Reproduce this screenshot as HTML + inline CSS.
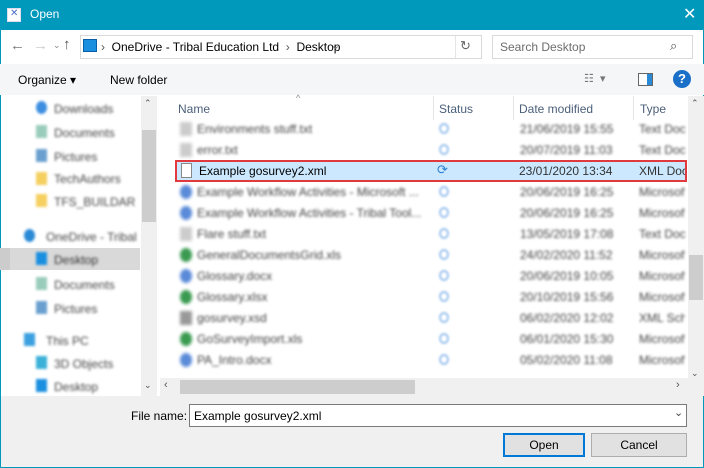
<!DOCTYPE html><html><head><style>
*{margin:0;padding:0;box-sizing:border-box}
body{width:704px;height:468px;overflow:hidden;font-family:"Liberation Sans",sans-serif;font-size:12px;color:#000;background:#fff;position:relative}
.a{position:absolute}
.bl{filter:blur(1.4px);color:#444;white-space:nowrap}
.row{position:absolute;left:175px;width:511px;height:21px}
.row span{position:absolute;top:4px}
.row span.t{width:46px;overflow:hidden}
.ic{position:absolute;left:5px;top:4px;width:12px;height:14px;filter:blur(1.5px)}
.st{position:absolute;left:264px;top:5px;width:10px;height:11px;border-radius:50%;border:2px solid #9cc3ee;filter:blur(1px)}
.nv{position:absolute;left:34px;filter:blur(1.4px);color:#444;white-space:nowrap}
.ni{position:absolute;left:36px;width:11px;height:13px;filter:blur(1.4px)}
</style></head><body>
<div class="a" style="left:0;top:0;width:704px;height:30px;background:#0099bc"></div>
<div class="a" style="left:7px;top:8px;width:14px;height:14px;background:#fff;border:1px solid #dde"></div>
<div class="a" style="left:10px;top:8px;color:#4a6fc8;font-size:10px">✕</div>
<div class="a" style="left:30px;top:7px;color:#fff;font-size:12px">Open</div>
<div class="a" style="left:683px;top:4px;color:#fff;font-size:16px">✕</div>
<div class="a" style="left:0;top:30px;width:1px;height:438px;background:#0099bc"></div>
<div class="a" style="left:703px;top:30px;width:1px;height:438px;background:#0099bc"></div>
<div class="a" style="left:0;top:467px;width:704px;height:1px;background:#0099bc"></div>
<div class="a" style="left:10px;top:37px;color:#777;font-size:15px">←</div>
<div class="a" style="left:33px;top:37px;color:#ccc;font-size:15px">→</div>
<div class="a" style="left:53px;top:40px;color:#888;font-size:9px">⌄</div>
<div class="a" style="left:63px;top:36px;color:#555;font-size:15px">↑</div>
<div class="a" style="left:80px;top:35px;width:402px;height:24px;border:1px solid #d9d9d9"></div>
<div class="a" style="left:83px;top:39px;width:14px;height:13px;background:#1a8fe0;border:1px solid #0a5ea8"></div>
<div class="a" style="left:101px;top:40px;color:#555">›&nbsp; <span style="color:#000">OneDrive - Tribal Education Ltd</span> &nbsp;›&nbsp; <span style="color:#000">Desktop</span></div>
<div class="a" style="left:331px;top:39px;color:#666;font-size:11px">⌄</div>
<div class="a" style="left:460px;top:38px;color:#666;font-size:13px">↻</div>
<div class="a" style="left:455px;top:36px;width:1px;height:22px;background:#e5e5e5"></div>
<div class="a" style="left:492px;top:35px;width:201px;height:24px;border:1px solid #d9d9d9"></div>
<div class="a" style="left:500px;top:40px;color:#6d6d6d">Search Desktop</div>
<div class="a" style="left:670px;top:38px;color:#555;font-size:13px">⌕</div>
<div class="a" style="left:0;top:64px;width:704px;height:31px;background:#f5f6f7"></div>
<div class="a" style="left:18px;top:73px">Organize ▾</div>
<div class="a" style="left:110px;top:73px">New folder</div>
<div class="a" style="left:584px;top:72px;color:#777;font-size:11px">☷ &nbsp;▾</div>
<div class="a" style="left:638px;top:73px;width:15px;height:13px;border:1px solid #666;background:linear-gradient(90deg,#fff 60%,#2a8ad6 60%)"></div>
<div class="a" style="left:673px;top:70px;width:18px;height:18px;border-radius:50%;background:#1a6fc8;color:#fff;font-weight:bold;text-align:center;line-height:18px;font-size:13px">?</div>
<div class="a" style="left:10px;top:248px;width:130px;height:22px;background:#d9d9d9"></div>
<div class="a" style="left:0;top:248px;width:10px;height:22px;background:#ccc"></div>
<div class="ni" style="top:101px;background:#3b8ee0;border-radius:50%"></div><div class="nv" style="left:54px;top:102px">Downloads</div>
<div class="ni" style="top:125px;background:#9cb"></div><div class="nv" style="left:54px;top:126px">Documents</div>
<div class="ni" style="top:149px;background:#6aa0d0"></div><div class="nv" style="left:54px;top:150px">Pictures</div>
<div class="ni" style="top:172px;background:#f5d060"></div><div class="nv" style="left:54px;top:172px">TechAuthors</div>
<div class="ni" style="top:194px;background:#f5d060"></div><div class="nv" style="left:54px;top:195px">TFS_BUILDAR</div>
<div class="ni" style="left:24px;top:229px;background:#2a8ad6;border-radius:50%"></div><div class="nv" style="left:46px;top:230px">OneDrive - Tribal</div>
<div class="ni" style="top:252px;background:#1a8fe0"></div><div class="nv" style="left:54px;top:253px;color:#333">Desktop</div>
<div class="ni" style="top:277px;background:#9cb"></div><div class="nv" style="left:54px;top:278px">Documents</div>
<div class="ni" style="top:301px;background:#6aa0d0"></div><div class="nv" style="left:54px;top:302px">Pictures</div>
<div class="ni" style="left:24px;top:333px;background:#3ca0e0"></div><div class="nv" style="left:46px;top:334px">This PC</div>
<div class="ni" style="top:356px;background:#3bb0d8"></div><div class="nv" style="left:54px;top:357px">3D Objects</div>
<div class="ni" style="top:379px;background:#1a8fe0"></div><div class="nv" style="left:54px;top:380px">Desktop</div>
<div class="a" style="left:141px;top:96px;width:16px;height:300px;background:#f0f0f0"></div>
<div class="a" style="left:142px;top:130px;width:14px;height:92px;background:#cdcdcd"></div>
<div class="a" style="left:144px;top:98px;color:#555;font-size:9px">⌃</div>
<div class="a" style="left:144px;top:380px;color:#555;font-size:9px">⌄</div>
<div class="a" style="left:157px;top:96px;width:3px;height:300px;background:#fff"></div>
<div class="a" style="left:178px;top:102px;color:#4c607a">Name</div>
<div class="a" style="left:296px;top:93px;color:#888;font-size:9px">^</div>
<div class="a" style="left:433px;top:96px;width:1px;height:24px;background:#e5e5e5"></div>
<div class="a" style="left:439px;top:102px;color:#4c607a">Status</div>
<div class="a" style="left:513px;top:96px;width:1px;height:24px;background:#e5e5e5"></div>
<div class="a" style="left:519px;top:102px;color:#4c607a">Date modified</div>
<div class="a" style="left:633px;top:96px;width:1px;height:24px;background:#e5e5e5"></div>
<div class="a" style="left:640px;top:102px;color:#4c607a">Type</div>
<div class="row" style="top:118px"><div class="ic" style="background:#ccc"></div><span class="bl" style="left:22px">Environments stuff.txt</span><div class="st"></div><span class="bl" style="left:345px">21/06/2019 15:55</span><span class="bl t" style="left:464px">Text Docu</span></div>
<div class="row" style="top:139px"><div class="ic" style="background:#ccc"></div><span class="bl" style="left:22px">error.txt</span><div class="st"></div><span class="bl" style="left:345px">20/07/2019 11:03</span><span class="bl t" style="left:464px">Text Docu</span></div>
<div class="a" style="left:175px;top:160px;width:512px;height:22px;background:#cce8ff;border:2px solid #e0393e"></div>
<div class="a" style="left:181px;top:163px;width:11px;height:15px;border:1px solid #888;background:#fff"></div>
<div class="a" style="left:199px;top:164px">Example gosurvey2.xml</div>
<div class="a" style="left:437px;top:162px;color:#2a7fd0;font-size:13px">⟳</div>
<div class="a" style="left:519px;top:164px;color:#333">23/01/2020 13:34</div>
<div class="a" style="left:639px;top:164px;color:#333;width:46px;overflow:hidden;white-space:nowrap">XML Document</div>
<div class="row" style="top:181px"><div class="ic" style="background:#5a8ad8;border-radius:50%"></div><span class="bl" style="left:22px">Example Workflow Activities - Microsoft ...</span><div class="st"></div><span class="bl" style="left:345px">20/06/2019 16:25</span><span class="bl t" style="left:464px">Microsoft</span></div>
<div class="row" style="top:202px"><div class="ic" style="background:#5a8ad8;border-radius:50%"></div><span class="bl" style="left:22px">Example Workflow Activities - Tribal Tool...</span><div class="st"></div><span class="bl" style="left:345px">20/06/2019 16:25</span><span class="bl t" style="left:464px">Microsoft</span></div>
<div class="row" style="top:223px"><div class="ic" style="background:#ccc"></div><span class="bl" style="left:22px">Flare stuff.txt</span><div class="st"></div><span class="bl" style="left:345px">13/05/2019 17:08</span><span class="bl t" style="left:464px">Text Docu</span></div>
<div class="row" style="top:244px"><div class="ic" style="background:#3a9a50;border-radius:50%"></div><span class="bl" style="left:22px">GeneralDocumentsGrid.xls</span><div class="st"></div><span class="bl" style="left:345px">24/02/2020 11:52</span><span class="bl t" style="left:464px">Microsoft</span></div>
<div class="row" style="top:265px"><div class="ic" style="background:#5a8ad8;border-radius:50%"></div><span class="bl" style="left:22px">Glossary.docx</span><div class="st"></div><span class="bl" style="left:345px">20/06/2019 10:05</span><span class="bl t" style="left:464px">Microsoft</span></div>
<div class="row" style="top:286px"><div class="ic" style="background:#3a9a50;border-radius:50%"></div><span class="bl" style="left:22px">Glossary.xlsx</span><div class="st"></div><span class="bl" style="left:345px">20/10/2019 15:56</span><span class="bl t" style="left:464px">Microsoft</span></div>
<div class="row" style="top:307px"><div class="ic" style="background:#999"></div><span class="bl" style="left:22px">gosurvey.xsd</span><div class="st"></div><span class="bl" style="left:345px">06/02/2020 12:02</span><span class="bl t" style="left:464px">XML Sche</span></div>
<div class="row" style="top:328px"><div class="ic" style="background:#3a9a50;border-radius:50%"></div><span class="bl" style="left:22px">GoSurveyImport.xls</span><div class="st"></div><span class="bl" style="left:345px">06/01/2020 15:30</span><span class="bl t" style="left:464px">Microsoft</span></div>
<div class="row" style="top:349px"><div class="ic" style="background:#5a8ad8;border-radius:50%"></div><span class="bl" style="left:22px">PA_Intro.docx</span><div class="st"></div><span class="bl" style="left:345px">05/02/2020 11:08</span><span class="bl t" style="left:464px">Microsoft</span></div>
<div class="a" style="left:688px;top:96px;width:16px;height:300px;background:#f0f0f0"></div>
<div class="a" style="left:689px;top:255px;width:14px;height:45px;background:#cdcdcd"></div>
<div class="a" style="left:691px;top:98px;color:#555;font-size:9px">⌃</div>
<div class="a" style="left:691px;top:368px;color:#555;font-size:9px">⌄</div>
<div class="a" style="left:160px;top:378px;width:528px;height:18px;background:#f0f0f0"></div>
<div class="a" style="left:180px;top:380px;width:235px;height:14px;background:#cdcdcd"></div>
<div class="a" style="left:164px;top:379px;color:#555;font-size:11px">‹</div>
<div class="a" style="left:676px;top:379px;color:#555;font-size:11px">›</div>
<div class="a" style="left:1px;top:396px;width:702px;height:71px;background:#f0f0f0"></div>
<div class="a" style="left:131px;top:409px">File name:</div>
<div class="a" style="left:189px;top:404px;width:498px;height:23px;background:#fff;border:1px solid #7a7a7a"></div>
<div class="a" style="left:194px;top:409px">Example gosurvey2.xml</div>
<div class="a" style="left:674px;top:406px;color:#444;font-size:11px">⌄</div>
<div class="a" style="left:503px;top:433px;width:82px;height:24px;background:#e1e1e1;border:2px solid #0078d7;text-align:center;line-height:20px">Open</div>
<div class="a" style="left:591px;top:433px;width:96px;height:24px;background:#e1e1e1;border:1px solid #adadad;text-align:center;line-height:22px">Cancel</div>
</body></html>
